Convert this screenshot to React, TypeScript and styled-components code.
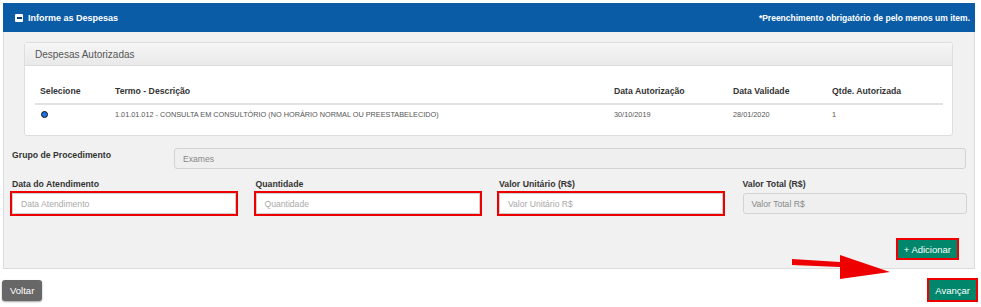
import React from "react";
import styled, { createGlobalStyle } from "styled-components";

const GlobalStyle = createGlobalStyle`
  html, body {
    margin: 0;
    padding: 0;
    background: #ffffff;
    font-family: "Liberation Sans", Arial, sans-serif;
  }
`;

const Page = styled.div`
  position: relative;
  width: 981px;
  height: 307px;
  overflow: hidden;
`;

const Panel = styled.div`
  margin: 3px 6px 0 3px;
  border: 1px solid #dcdcdc;
  border-top: none;
  background: #f1f1f1;
`;

const Header = styled.div`
  height: 29px;
  background: #0b5ca6;
  color: #fff;
  display: flex;
  align-items: center;
  justify-content: space-between;
  padding: 0 5px 0 12px;
  font-size: 9px;
  font-weight: bold;
  margin: 0 -1px;
`;

const HeaderTitle = styled.div`
  display: flex;
  align-items: center;
  gap: 5px;
`;

const Note = styled.span`
  font-size: 8.5px;
`;

const MinusBox = styled.span`
  width: 8px;
  height: 8px;
  background: #fff;
  border-radius: 1px;
  display: flex;
  align-items: center;
  justify-content: center;
  &::after {
    content: "";
    width: 5px;
    height: 2px;
    background: #0b3f73;
  }
`;

const Body = styled.div`
  padding: 10px 8px 10px 8px;
`;

const Card = styled.div`
  margin: 0 13px 0 12px;
  border: 1px solid #dedede;
  border-radius: 3px;
  background: #fff;
  overflow: hidden;
`;

const CardHeader = styled.div`
  height: 22px;
  display: flex;
  align-items: center;
  padding-left: 10px;
  background: linear-gradient(#f6f6f6, #e9e9e9);
  border-bottom: 1px solid #dcdcdc;
  color: #555;
  font-size: 10px;
`;

const CardBody = styled.div`
  padding: 9px 9px 7px 10px;
`;

const Table = styled.table`
  width: 100%;
  border-collapse: collapse;
  table-layout: fixed;
`;

const Th = styled.th<{ $w?: number }>`
  width: ${(p) => (p.$w ? `${p.$w}px` : "auto")};
  text-align: left;
  font-size: 8.7px;
  font-weight: bold;
  color: #333;
  line-height: 12px;
  padding: 10px 5px 6px;
  border-bottom: 2px solid #e2e2e2;
  white-space: nowrap;
`;

const Td = styled.td`
  font-size: 7.3px;
  color: #555;
  line-height: 12px;
  padding: 2px 5px 6px;
  white-space: nowrap;
`;

const Radio = styled.span`
  display: inline-block;
  width: 5px;
  height: 5px;
  border-radius: 50%;
  background: #1f6fe6;
  border: 1px solid #111;
  margin: 4px 0 0 1px;
`;

const GroupRow = styled.div`
  display: flex;
  align-items: flex-start;
  margin-top: 12px;
`;

const Label = styled.div`
  font-size: 8.7px;
  font-weight: bold;
  color: #333;
  line-height: 12px;
  white-space: nowrap;
`;

const GroupLabel = styled(Label)`
  width: 162px;
  padding-top: 1px;
`;

const Field = styled.div<{ $flag?: boolean; $disabled?: boolean }>`
  height: 19px;
  box-sizing: content-box;
  display: flex;
  align-items: center;
  padding-left: 8px;
  border: 1px solid ${(p) => (p.$disabled ? "#d3d3d3" : "#cfcfcf")};
  border-radius: ${(p) => (p.$flag ? "0" : "3px")};
  background: ${(p) => (p.$disabled ? "#efefef" : "#fff")};
  color: ${(p) => (p.$disabled ? "#888" : "#aaa")};
  font-size: 8.6px;
  outline: ${(p) => (p.$flag ? "2px solid #ee0000" : "none")};
  outline-offset: 0;
`;

const GroupField = styled(Field)`
  flex: 1;
`;

const FieldGrid = styled.div`
  display: grid;
  grid-template-columns: repeat(4, 224px);
  column-gap: 19.5px;
  margin-top: 9px;
`;

const FieldCol = styled.div`
  display: flex;
  flex-direction: column;
  gap: 3px;
`;

const ActionRow = styled.div`
  display: flex;
  justify-content: flex-end;
  margin-top: 26px;
  padding-right: 9px;
`;

const Button = styled.button<{ $tone: "green" | "grey"; $flag?: boolean }>`
  font-family: "Liberation Sans", Arial, sans-serif;
  font-size: 9.5px;
  color: #fff;
  border: none;
  border-radius: ${(p) => (p.$flag ? "0" : "3px")};
  background: ${(p) => (p.$tone === "green" ? "#00876b" : "#676767")};
  box-shadow: ${(p) => (p.$tone === "grey" ? "0 1px 2px rgba(0,0,0,0.35)" : "none")};
  outline: ${(p) => (p.$flag ? "2px solid #ee0000" : "none")};
  padding: 0 ${(p) => (p.$tone === "grey" ? "8px" : "6px")};
  height: 18px;
  cursor: pointer;
`;

const Footer = styled.div`
  display: flex;
  justify-content: space-between;
  align-items: flex-start;
  margin-top: 11px;
  padding: 0 5px 0 2px;
`;

const Arrow = styled.svg`
  position: absolute;
  left: 788px;
  top: 252px;
`;

const columns = [
  { title: "Selecione", w: 65 },
  { title: "Termo - Descrição", w: 489 },
  { title: "Data Autorização", w: 109 },
  { title: "Data Validade", w: 89 },
  { title: "Qtde. Autorizada" },
];

const fields = [
  { label: "Data do Atendimento", placeholder: "Data Atendimento", flag: true },
  { label: "Quantidade", placeholder: "Quantidade", flag: true },
  { label: "Valor Unitário (R$)", placeholder: "Valor Unitário R$", flag: true },
  { label: "Valor Total (R$)", placeholder: "Valor Total R$", disabled: true },
];

export default function App() {
  return (
    <Page>
      <GlobalStyle />
      <Panel>
        <Header>
          <HeaderTitle>
            <MinusBox />
            Informe as Despesas
          </HeaderTitle>
          <Note>*Preenchimento obrigatório de pelo menos um item.</Note>
        </Header>
        <Body>
          <Card>
            <CardHeader>Despesas Autorizadas</CardHeader>
            <CardBody>
              <Table>
                <thead>
                  <tr>
                    {columns.map((c) => (
                      <Th key={c.title} $w={c.w}>
                        {c.title}
                      </Th>
                    ))}
                  </tr>
                </thead>
                <tbody>
                  <tr>
                    <Td>
                      <Radio />
                    </Td>
                    <Td>1.01.01.012 - CONSULTA EM CONSULTÓRIO (NO HORÁRIO NORMAL OU PREESTABELECIDO)</Td>
                    <Td>30/10/2019</Td>
                    <Td>28/01/2020</Td>
                    <Td>1</Td>
                  </tr>
                </tbody>
              </Table>
            </CardBody>
          </Card>

          <GroupRow>
            <GroupLabel>Grupo de Procedimento</GroupLabel>
            <GroupField $disabled>Exames</GroupField>
          </GroupRow>

          <FieldGrid>
            {fields.map((f) => (
              <FieldCol key={f.label}>
                <Label>{f.label}</Label>
                <Field $flag={f.flag} $disabled={f.disabled}>
                  {f.placeholder}
                </Field>
              </FieldCol>
            ))}
          </FieldGrid>

          <ActionRow>
            <Button $tone="green" $flag>
              + Adicionar
            </Button>
          </ActionRow>
        </Body>
      </Panel>

      <Footer>
        <Button $tone="grey" style={{ height: 21 }}>
          Voltar
        </Button>
        <Button $tone="green" $flag style={{ height: 20 }}>
          Avançar
        </Button>
      </Footer>

      <Arrow width="106" height="30" viewBox="0 0 106 30">
        <polygon points="4,7 52,10 52,15 4,13" fill="#ee0000" />
        <polygon points="52,3 102,20 52,27" fill="#ee0000" />
      </Arrow>
    </Page>
  );
}
